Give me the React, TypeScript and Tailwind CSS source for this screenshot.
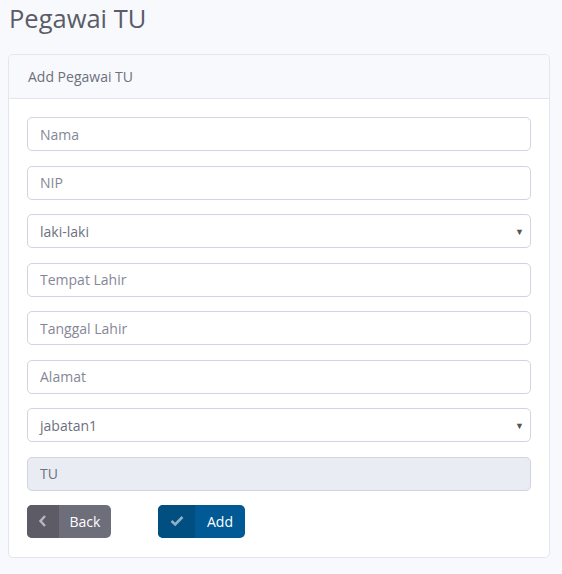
import React from 'react';

const fields = ['Nama', 'NIP'];
const fields2 = ['Tempat Lahir', 'Tanggal Lahir', 'Alamat'];

function TextInput({ placeholder }: { placeholder: string }) {
  return (
    <input
      type="text"
      placeholder={placeholder}
      className="h-[34px] w-full rounded-[5px] border border-[#d1d3e2] bg-white px-3 text-[14px] text-[#6e707e] placeholder:text-[#858796] outline-none"
    />
  );
}

function SelectBox({ value }: { value: string }) {
  return (
    <div className="relative h-[34px] w-full rounded-[5px] border border-[#d1d3e2] bg-white px-3 flex items-center text-[14px] text-[#6e707e]">
      <span>{value}</span>
      <span className="absolute right-[6px] top-[10px] text-[9px] text-[#555]">▼</span>
    </div>
  );
}

export default function App() {
  return (
    <div className="min-h-[574px] bg-[#f8f9fc] px-2 font-['Open_Sans',sans-serif]">
      <h1 className="text-[25.5px] leading-[37px] text-[#5a5c69] pl-[1px]">Pegawai TU</h1>

      {/* Card */}
      <div className="mt-[17px] w-[542px] rounded-[5px] border border-[#e3e6f0] bg-white">
        <div className="h-[44px] border-b border-[#e3e6f0] bg-[#f8f9fc] rounded-t-[5px] px-[19px] flex items-center text-[14px] text-[#6e707e]">
          Add Pegawai TU
        </div>

        <div className="px-[18px] pt-[18px] pb-[19px]">
          <div className="flex flex-col gap-[14.5px]">
            {fields.map((f) => (
              <TextInput key={f} placeholder={f} />
            ))}
            <SelectBox value="laki-laki" />
            {fields2.map((f) => (
              <TextInput key={f} placeholder={f} />
            ))}
            <SelectBox value="jabatan1" />
            <div className="h-[34px] w-full rounded-[5px] border border-[#d1d3e2] bg-[#eaecf4] px-3 flex items-center text-[14px] text-[#6e707e]">
              TU
            </div>
          </div>

          <div className="mt-[14px] flex gap-[47px]">
            <button className="flex h-[33px] w-[84px] overflow-hidden rounded-[5px] bg-[#6e6d7a] text-white text-[14px]">
              <span className="flex h-full w-[32px] items-center justify-center bg-[#5c5b66]">
                <svg width="10" height="14" viewBox="0 0 10 14" fill="none" stroke="#b8b7c0" strokeWidth="2.4">
                  <path d="M7 2 L2.5 7 L7 12" />
                </svg>
              </span>
              <span className="flex flex-1 items-center justify-center">Back</span>
            </button>
            <button className="flex h-[33px] w-[87px] overflow-hidden rounded-[5px] bg-[#015a96] text-white text-[14px]">
              <span className="flex h-full w-[37px] items-center justify-center bg-[#014f80]">
                <svg width="14" height="12" viewBox="0 0 14 12" fill="none" stroke="#8fb0c8" strokeWidth="2.6">
                  <path d="M1.5 6 L5.2 9.5 L12.5 2" />
                </svg>
              </span>
              <span className="flex flex-1 items-center justify-center">Add</span>
            </button>
          </div>
        </div>
      </div>
    </div>
  );
}
